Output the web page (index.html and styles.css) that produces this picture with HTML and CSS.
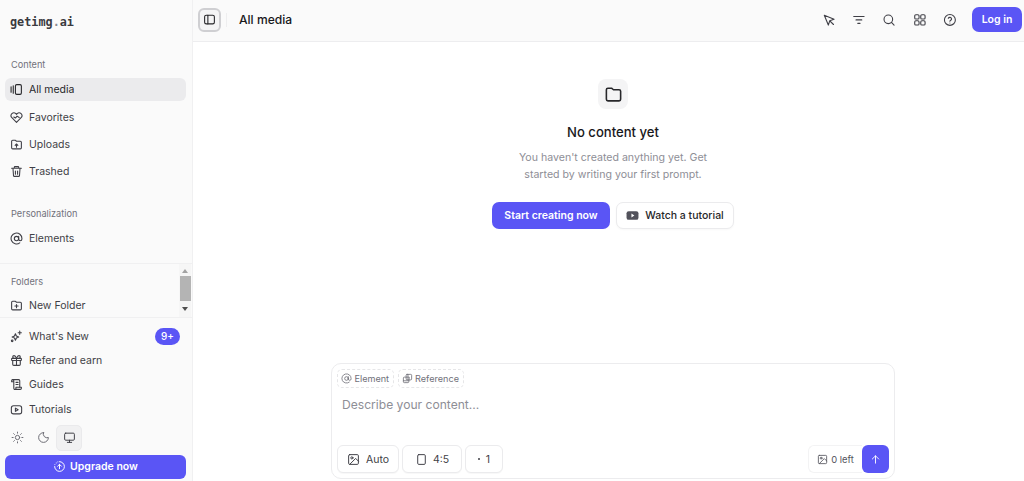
FILE: index.html
```html
<!DOCTYPE html>
<html lang="en">
<head>
<meta charset="utf-8">
<title>getimg.ai</title>
<link rel="stylesheet" href="styles.css">
</head>
<body>
<div class="app">
  <aside class="sidebar">
    <div class="brand">getimg<span class="dot">.</span>ai</div>
    <section class="group group-content">
      <div class="label">Content</div>
      <a class="item active"><svg class="ic" viewBox="0 0 24 24"><rect x="10" y="3" width="11" height="18" rx="2.5"/><path d="M6 5v14M2 7v10"/></svg>All media</a>
      <a class="item"><svg class="ic" viewBox="0 0 24 24"><path d="M12 21 3.5 12.4a5.3 5.3 0 0 1 0-7.4 5.2 5.2 0 0 1 7.3 0l1.2 1.2L13.200 5a5.200 5.200 0 0 1 7.300 0 5.300 5.300 0 0 1 0 7.400z"/><path d="m7 11 3 2 3-3.500 4 2.500"/></svg>Favorites</a>
      <a class="item"><svg class="ic" viewBox="0 0 24 24"><path d="M5 20h14a2 2 0 0 0 2-2V8a2 2 0 0 0-2-2h-7L9.500 4H5a2 2 0 0 0-2 2v12a2 2 0 0 0 2 2z"/><path d="M12 17v-6M9.500 13.500 12 11l2.500 2.500"/></svg>Uploads</a>
      <a class="item"><svg class="ic" viewBox="0 0 24 24"><path d="M3 6h18M8 6V4a1 1 0 0 1 1-1h6a1 1 0 0 1 1 1v2M5.500 6l1 14a1.500 1.500 0 0 0 1.500 1h8a1.500 1.500 0 0 0 1.500-1l1-14M10 11v6M14 11v6"/></svg>Trashed</a>
    </section>
    <section class="group group-personal">
      <div class="label">Personalization</div>
      <a class="item"><svg class="ic" viewBox="0 0 24 24"><circle cx="12" cy="12" r="4"/><path d="M16 8v5a3 3 0 0 0 6 0v-1a10 10 0 1 0-4 8"/></svg>Elements</a>
    </section>
    <section class="folders">
      <div class="folders-list">
        <div class="label">Folders</div>
        <a class="item"><svg class="ic" viewBox="0 0 24 24"><path d="M5 20h14a2 2 0 0 0 2-2V8a2 2 0 0 0-2-2h-7L9.500 4H5a2 2 0 0 0-2 2v12a2 2 0 0 0 2 2z"/><path d="M12 10v6M9 13h6"/></svg>New Folder</a>
      </div>
      <div class="scrollbar">
        <span class="arrow-up"></span>
        <span class="thumb"></span>
        <span class="arrow-down"></span>
      </div>
    </section>
    <section class="links">
      <a class="link"><svg class="ic" viewBox="0 0 24 24"><path d="m10 7 1.800 4.200 4.200 1.800-4.200 1.800L10 19l-1.800-4.200L4 13l4.200-1.800z"/><path d="M18 2v6M15 5h6"/><circle cx="4" cy="20" r="1.500"/></svg>What's New<span class="badge">9+</span></a>
      <a class="link"><svg class="ic" viewBox="0 0 24 24"><rect x="3" y="8" width="18" height="4" rx="1"/><path d="M12 8v13M19 12v7a2 2 0 0 1-2 2H7a2 2 0 0 1-2-2v-7M7.500 8a2.500 2.500 0 0 1 0-5C10 3 12 8 12 8s2-5 4.500-5a2.500 2.500 0 0 1 0 5"/></svg>Refer and earn</a>
      <a class="link"><svg class="ic" viewBox="0 0 24 24"><path d="M8 21h11a2 2 0 0 0 2-2v-2H11v2a2 2 0 0 1-4 0V5a2 2 0 0 0-2-2 2 2 0 0 0-2 2v2h4"/><path d="M5 3h11a2 2 0 0 1 2 2v12M11 8h4M11 12h4"/></svg>Guides</a>
      <a class="link"><svg class="ic" viewBox="0 0 24 24"><rect x="2.500" y="5" width="19" height="15" rx="4"/><path d="m10 9.500 5 3-5 3z"/></svg>Tutorials</a>
    </section>
    <div class="themes">
      <span class="theme"><svg class="ic" viewBox="0 0 24 24"><circle cx="12" cy="12" r="4"/><path d="M12 2v2M12 20v2M4.900 4.900l1.400 1.400M17.700 17.700l1.400 1.400M2 12h2M20 12h2M4.900 19.100l1.400-1.400M17.700 6.300l1.400-1.400"/></svg></span>
      <span class="theme"><svg class="ic" viewBox="0 0 24 24"><path d="M12 3a7 7 0 0 0 9 9 9 9 0 1 1-9-9z"/></svg></span>
      <span class="theme theme-on"><svg class="ic" viewBox="0 0 24 24"><rect x="3" y="4" width="18" height="13" rx="2"/><path d="M8 21h8M12 17v4"/></svg></span>
    </div>
    <a class="upgrade"><svg class="ic" viewBox="0 0 24 24"><path d="M12 3a9 9 0 1 1-9 9"/><path d="M3.500 8.500l.01 0M6 5.500l.01 0M9 3.500l.01 0M12 16V8M8.500 11.500 12 8l3.500 3.500"/></svg>Upgrade now</a>
  </aside>

  <main class="main">
    <header class="topbar">
      <button class="toggle"><svg class="ic" viewBox="0 0 24 24"><rect x="3" y="4" width="18" height="16" rx="3"/><path d="M9 4v16"/></svg></button>
      <span class="divider"></span>
      <h1 class="title">All media</h1>
      <nav class="tools">
        <svg class="ic" viewBox="0 0 24 24"><path d="m4 4 7 17 2.500-7.500L21 11z"/><path d="m14 14 6 6"/></svg>
        <svg class="ic" viewBox="0 0 24 24"><path d="M3 6h18M7 12h10M10 18h4"/></svg>
        <svg class="ic" viewBox="0 0 24 24"><circle cx="11" cy="11" r="7.500"/><path d="m21 21-4.500-4.500"/></svg>
        <svg class="ic" viewBox="0 0 24 24"><rect x="3" y="3" width="7.500" height="7.500" rx="2"/><rect x="13.500" y="3" width="7.500" height="7.500" rx="2"/><rect x="3" y="13.500" width="7.500" height="7.500" rx="2"/><rect x="13.500" y="13.500" width="7.500" height="7.500" rx="2"/></svg>
        <svg class="ic" viewBox="0 0 24 24"><circle cx="12" cy="12" r="9.500"/><path d="M9.200 9.300a3 3 0 0 1 5.700 1c0 2-2.900 2.500-2.900 4"/><path d="M12 17.500h.01"/></svg>
      </nav>
      <button class="login">Log in</button>
    </header>

    <div class="canvas">
      <section class="empty">
        <div class="empty-icon"><svg viewBox="0 0 24 24"><path d="M5 20h14a2 2 0 0 0 2-2V8a2 2 0 0 0-2-2h-7L9.500 4H5a2 2 0 0 0-2 2v12a2 2 0 0 0 2 2z"/></svg></div>
        <h2 class="empty-title">No content yet</h2>
        <p class="empty-text">You haven't created anything yet. Get<br>started by writing your first prompt.</p>
        <div class="empty-actions">
          <button class="btn-primary">Start creating now</button>
          <button class="btn-outline"><svg viewBox="0 0 24 24"><rect x="1" y="4" width="22" height="16" rx="4" class="yt"/><path d="m10 8.500 5.500 3.500-5.500 3.500z" class="yt-play"/></svg>Watch a tutorial</button>
        </div>
      </section>

      <section class="composer">
        <div class="chips">
          <span class="chip"><svg class="ic" viewBox="0 0 24 24"><circle cx="12" cy="12" r="4"/><path d="M16 8v5a3 3 0 0 0 6 0v-1a10 10 0 1 0-4 8"/></svg>Element</span>
          <span class="chip"><svg class="ic" viewBox="0 0 24 24"><rect x="9" y="3" width="12" height="12" rx="2"/><path d="M15 9H5a2 2 0 0 0-2 2v8a2 2 0 0 0 2 2h8a2 2 0 0 0 2-2z"/><path d="M3 17h12M13 3v12"/></svg>Reference</span>
        </div>
        <div class="prompt">Describe your content...</div>
        <div class="controls">
          <button class="ctl ctl-auto"><svg class="ic" viewBox="0 0 24 24"><rect x="3" y="3" width="18" height="18" rx="2"/><circle cx="9" cy="9" r="2"/><path d="m21 15-5-5L5 21"/></svg>Auto</button>
          <button class="ctl ctl-ratio"><svg class="ic" viewBox="0 0 24 24"><rect x="5" y="3" width="14" height="18" rx="2"/></svg>4:5</button>
          <button class="ctl ctl-count"><span class="bullet"></span>1</button>
          <div class="credits"><svg class="ic" viewBox="0 0 24 24"><rect x="3" y="3" width="18" height="18" rx="2"/><circle cx="9" cy="9" r="2"/><path d="m21 15-5-5L5 21"/></svg>0 left</div>
          <button class="send"><svg class="ic" viewBox="0 0 24 24"><path d="M12 20V4M5 11l7-7 7 7"/></svg></button>
        </div>
      </section>
    </div>
  </main>
</div>
</body>
</html>
```

FILE: styles.css
```css
* { box-sizing: border-box; }
html, body { margin: 0; height: 100%; overflow: hidden; }
body {
  font-family: Inter, "Liberation Sans", sans-serif;
  font-size: 10.5px;
  color: #27272a;
  background: #fff;
}
button { font: inherit; color: inherit; cursor: pointer; }
h1, h2, p { margin: 0; }
.ic {
  width: 13px;
  height: 13px;
  flex: none;
  fill: none;
  stroke: currentColor;
  stroke-width: 2;
  stroke-linecap: round;
  stroke-linejoin: round;
}
.app { display: flex; height: 481px; }

/* sidebar */
.sidebar {
  width: 193px;
  flex: none;
  display: flex;
  flex-direction: column;
  background: #fafafa;
  border-right: 1px solid #f0f0f1;
}
.sidebar > * { flex: none; }
.brand {
  height: 42px;
  padding: 14px 0 0 10px;
  font-family: "DejaVu Sans Mono", monospace;
  font-weight: 700;
  font-size: 11.800px;
  line-height: 16px;
  color: #3a3a40;
}
.brand .dot { color: #8a8a92; }
.label {
  flex: none;
  height: 14px;
  line-height: 14px;
  padding-left: 6px;
  font-size: 9.200px;
  color: #71717a;
}
.group { padding: 0 6px 0 5px; display: flex; flex-direction: column; gap: 4px; }
.group-content { padding-top: 16px; }
.group-personal { padding-top: 23.400px; height: 80.400px; border-bottom: 1px solid #f0f0f1; }
.group-content .label { margin-bottom: 2px; }
.group-personal .label { margin-bottom: 2.300px; }
.item {
  flex: none;
  display: flex;
  align-items: center;
  gap: 6px;
  height: 23.400px;
  padding-left: 5px;
  border-radius: 6px;
  color: #3f3f46;
}
.item.active { background: #ebebed; color: #27272a; }
.folders {
  height: 54px;
  display: flex;
  border-bottom: 1px solid #f0f0f1;
}
.folders-list {
  flex: 1;
  padding: 11px 0 0 5px;
  display: flex;
  flex-direction: column;
  gap: 5.300px;
}
.scrollbar {
  width: 12px;
  margin-right: 1px;
  display: flex;
  flex-direction: column;
  align-items: center;
  background: #f6f6f6;
}
.arrow-up, .arrow-down {
  width: 0;
  height: 0;
  border-left: 3.500px solid transparent;
  border-right: 3.500px solid transparent;
}
.arrow-up { margin: 5px 0 3px; border-bottom: 4px solid #a3a3a3; }
.arrow-down { margin: 6px 0 0; border-top: 4px solid #505050; }
.thumb { width: 11px; height: 25px; background: #b4b4b4; }
.links { padding: 6.400px 6px 0 5px; display: flex; flex-direction: column; }
.link {
  display: flex;
  align-items: center;
  gap: 6px;
  height: 24.200px;
  padding: 0 6px 0 5px;
  color: #3f3f46;
}
.badge {
  margin-left: auto;
  width: 25px;
  height: 17px;
  border-radius: 9px;
  background: #5a55f5;
  color: #fff;
  font-size: 10px;
  font-weight: 500;
  display: flex;
  align-items: center;
  justify-content: center;
}
.themes { display: flex; padding: 3.800px 0 0 4px; }
.theme {
  width: 26px;
  height: 26px;
  display: flex;
  align-items: center;
  justify-content: center;
  border-radius: 5px;
  color: #6b6b73;
}
.theme .ic { stroke-width: 1.800; }
.theme-on { background: #f1f1f2; border: 1px solid #eaeaec; color: #3f3f46; }
.upgrade {
  margin: 4px 6px 0 5px;
  height: 24px;
  border-radius: 6px;
  background: #5a55f5;
  color: #fff;
  font-weight: 600;
  display: flex;
  align-items: center;
  justify-content: center;
  gap: 4px;
}
.upgrade .ic { stroke-width: 1.800; }

/* main */
.main { flex: 1; min-width: 0; display: flex; flex-direction: column; }
.topbar {
  height: 42px;
  flex: none;
  display: flex;
  align-items: center;
  padding: 0 2px 2px 5px;
  background: #fafafa;
  border-bottom: 1px solid #ededef;
}
.toggle {
  width: 23px;
  height: 24px;
  padding: 0;
  display: flex;
  align-items: center;
  justify-content: center;
  background: #f4f4f5;
  border: 2px solid #cfcfd2;
  border-radius: 6px;
}
.divider { width: 1px; height: 14px; margin: 0 12px 0 5px; background: #eeeeef; }
.title { font-size: 12.100px; font-weight: 500; color: #18181b; }
.tools {
  margin-left: auto;
  display: flex;
  gap: 16.600px;
  margin-right: 15px;
  color: #3f3f46;
}
.tools .ic { width: 13.800px; height: 13.800px; stroke-width: 1.900; }
.login {
  width: 50px;
  height: 25px;
  padding: 0;
  border: 0;
  border-radius: 7px;
  background: #5a55f5;
  color: #fff;
  font-weight: 600;
}
.canvas {
  flex: 1;
  min-height: 0;
  display: flex;
  flex-direction: column;
  align-items: center;
  padding: 37px 0 2px 9px;
}
.empty { display: flex; flex-direction: column; align-items: center; }
.empty-icon {
  width: 30px;
  height: 30px;
  border-radius: 8px;
  background: #f4f4f5;
  display: flex;
  align-items: center;
  justify-content: center;
}
.empty-icon svg {
  width: 19px;
  height: 19px;
  fill: none;
  stroke: #27272a;
  stroke-width: 2;
  stroke-linejoin: round;
}
.empty-title {
  margin-top: 14px;
  font-size: 13.100px;
  line-height: 18px;
  font-weight: 500;
  color: #18181b;
}
.empty-text {
  margin-top: 8px;
  text-align: center;
  line-height: 17.300px;
  font-size: 10.600px;
  color: #8e8e96;
}
.empty-actions { display: flex; gap: 6px; margin-top: 18px; }
.btn-primary {
  width: 118px;
  height: 27px;
  padding: 0;
  border: 0;
  border-radius: 7px;
  background: #5a55f5;
  color: #fff;
  font-weight: 600;
}
.btn-outline {
  width: 118px;
  height: 27px;
  padding: 0;
  display: flex;
  align-items: center;
  justify-content: center;
  gap: 6px;
  background: #fff;
  border: 1px solid #ebebed;
  border-radius: 7px;
  font-weight: 500;
  box-shadow: 0 1px 2px rgba(0,0,0,.03);
}
.btn-outline svg { width: 13px; height: 13px; }
.yt { fill: #52525b; }
.yt-play { fill: #fff; }

/* composer */
.composer {
  margin-top: auto;
  width: 564px;
  height: 116px;
  border: 1px solid #ececee;
  border-radius: 10px;
  background: #fff;
  padding: 5px;
  display: flex;
  flex-direction: column;
}
.chips { display: flex; gap: 3.500px; }
.chip {
  height: 19px;
  padding: 0 4px 0 3px;
  display: flex;
  align-items: center;
  gap: 2.500px;
  border: 1px dashed #e6e6e8;
  border-radius: 5px;
  font-size: 9.100px;
  color: #71717a;
}
.chip .ic { width: 11px; height: 11px; stroke-width: 1.800; }
.prompt {
  margin: 8px 0 0 5px;
  font-size: 12.100px;
  line-height: 18px;
  color: #8e8e96;
}
.controls { margin-top: auto; display: flex; align-items: stretch; height: 28px; gap: 3px; }
.ctl {
  padding: 0;
  display: flex;
  align-items: center;
  justify-content: center;
  gap: 6px;
  background: #fff;
  border: 1px solid #ebebed;
  border-radius: 6px;
  box-shadow: 0 1px 1px rgba(0,0,0,.03);
  color: #3f3f46;
}
.ctl .ic { stroke-width: 1.800; }
.ctl-auto { width: 62px; gap: 6px; }
.ctl-ratio { width: 60px; gap: 5px; }
.ctl-count { width: 38px; gap: 6px; }
.bullet { width: 2px; height: 2px; border-radius: 50%; background: #3f3f46; }
.credits {
  margin-left: auto;
  margin-right: -3px;
  width: 54px;
  display: flex;
  align-items: center;
  justify-content: center;
  gap: 3px;
  border: 1px solid #f3f3f4;
  border-right: 0;
  border-radius: 6px 0 0 6px;
  font-size: 9.400px;
  color: #52525b;
}
.credits .ic { width: 11px; height: 11px; stroke-width: 1.800; }
.send {
  width: 27px;
  padding: 0;
  border: 0;
  border-radius: 6px;
  background: #5a55f5;
  color: #fff;
  display: flex;
  align-items: center;
  justify-content: center;
}
.send .ic { width: 11px; height: 11px; }
```
